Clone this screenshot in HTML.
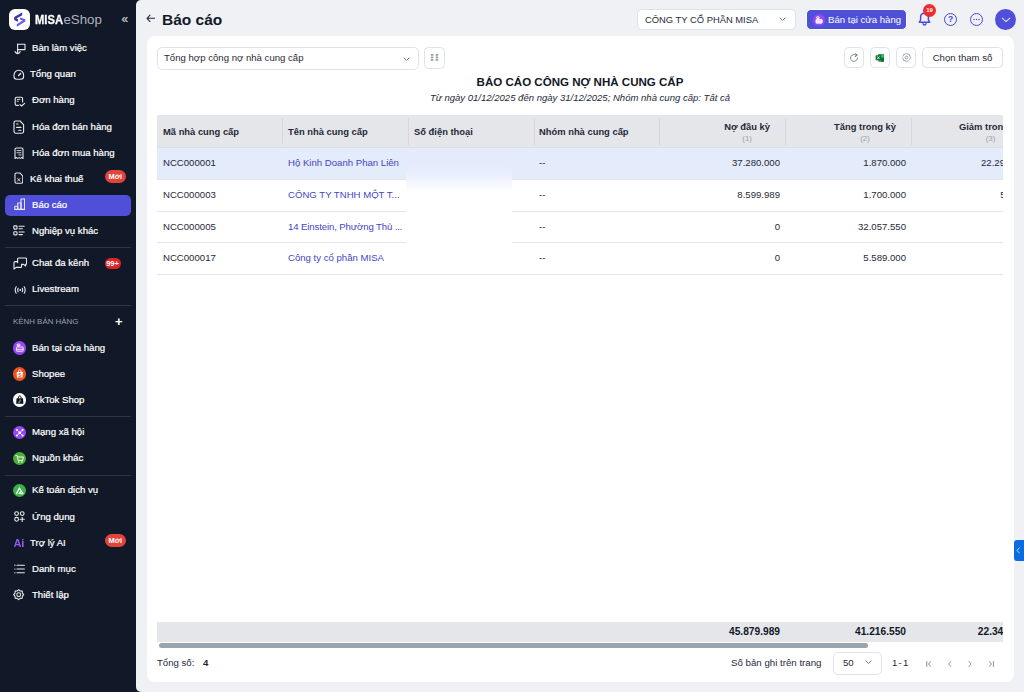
<!DOCTYPE html>
<html lang="vi">
<head>
<meta charset="utf-8">
<title>Báo cáo công nợ nhà cung cấp</title>
<style>
*{box-sizing:border-box;margin:0;padding:0}
html,body{width:1024px;height:692px;overflow:hidden}
body{font-family:"Liberation Sans",sans-serif;background:#111827;color:#1f2937;font-size:10.4px;position:relative}
.abs{position:absolute}
/* sidebar */
#sb{position:absolute;left:0;top:0;width:136px;height:692px;background:#111827;color:#fff}
#sb .it{position:absolute;left:5px;width:126px;height:22px;border-radius:5px;line-height:22px;font-size:9.6px;color:#fff;white-space:nowrap}
#sb .it .ic{position:absolute;left:7px;top:3px;width:16px;height:16px}
#sb .it .tx{position:absolute;left:27px;top:0;-webkit-text-stroke:.22px #fff}
#sb .it.on{background:#4f4fd9}
#sb .dv{position:absolute;left:5px;width:126px;height:1px;background:#2d3444}
#sb .bdg{position:absolute;top:4px;height:13px;line-height:13px;border-radius:7px;background:#e5484d;color:#fff;font-size:7.5px;font-weight:bold;text-align:center}
.circ{position:absolute;left:7.8px;top:4.6px;width:13.6px;height:13.6px;border-radius:50%}
/* topbar */
#title{position:absolute;left:162px;top:10px;font-size:15.5px;font-weight:bold;color:#111827;line-height:20px}
.box{position:absolute;background:#fff;border:1px solid #dfe2e8;border-radius:4.5px}
/* card */
#card{position:absolute;left:147px;top:36px;width:867px;height:646px;background:#fff;border-radius:8px}
#tbl{position:absolute;left:157px;top:115px;width:846px;height:533px;overflow:hidden}
.hd{position:absolute;left:0;top:0;width:1400px;height:33px;background:#e5e6ea;border-bottom:1px solid #dcdee4}
.hd .c{position:absolute;top:0;height:33px;font-weight:bold;color:#1f2937;font-size:9.4px;white-space:nowrap}
.hd .sep{position:absolute;top:3px;width:1px;height:27px;background:#d6d8de}
.row{position:absolute;left:0;width:1400px;height:32px;border-bottom:1px solid #e3e5ea;font-size:9.6px;color:#1f2937}
.row .c{position:absolute;top:0;line-height:29.4px;white-space:nowrap}
.row.sel{background:#e4ebfb}
.lnk{color:#4545c4}
.num{text-align:right}

.hd .h2{text-align:center;line-height:11px;padding-top:5.6px;white-space:nowrap}
.hd .h2 span{display:block;font-weight:normal;color:#9aa0ab;font-size:7.8px;line-height:11px;margin-top:1.2px}
.tot .c{position:absolute;top:0;line-height:19px;font-weight:bold;font-size:10.2px;color:#111827;white-space:nowrap}
.pg{top:652px;line-height:22px;font-size:9.6px;color:#1f2937;white-space:nowrap}
.ic2{position:absolute;left:7.8px;top:4.6px}
</style>
</head>
<body>
<div id="sb">
  <!-- logo -->
  <div class="abs" style="left:8.6px;top:8.6px;width:21px;height:21px;background:#fff;border-radius:6px"></div>
  <svg class="abs" style="left:8.6px;top:8.6px" width="21" height="21" viewBox="0 0 21 21"><path d="M13.2 3.5 L5.2 7.9 L5.2 11.1 L9 12.8 L9 10.3 L7.4 9.5 L13.2 6.2 Z" fill="#3a34a8"/><path d="M11 8.5 L16.3 10.3 L16.3 12.4 L7.8 17.8 L7.8 15.2 L13.6 11.6 L11 10.5 Z" fill="#6a5cf0"/></svg>
  <div class="abs" style="left:34.6px;top:10.5px;font-size:13px;line-height:18px;font-weight:bold;color:#fff;transform:scaleX(.86);transform-origin:0 0;-webkit-text-stroke:.3px #fff">MISA</div>
  <div class="abs" style="left:63.4px;top:11px;font-size:13.3px;line-height:18px;color:#aeb3bd">eShop</div>
  <div class="abs" style="left:121.6px;top:11px;font-size:12px;line-height:16px;color:#e5e7eb">«</div>

  <div class="it" style="top:37px"><span class="tx">Bàn làm việc</span></div>
  <div class="it" style="top:63px"><span class="tx" style="left:25px">Tổng quan</span></div>
  <div class="it" style="top:89px"><span class="tx">Đơn hàng</span></div>
  <div class="it" style="top:115.5px"><span class="tx">Hóa đơn bán hàng</span></div>
  <div class="it" style="top:141.5px"><span class="tx">Hóa đơn mua hàng</span></div>
  <div class="it" style="top:167.5px"><span class="tx" style="left:25px">Kê khai thuế</span><span class="bdg" style="left:99.5px;width:21.5px;top:2.5px;background:#e3443a">Mới</span></div>
  <div class="it on" style="top:194.5px;height:21.3px;line-height:19.6px"><span class="tx">Báo cáo</span></div>
  <div class="it" style="top:220px"><span class="tx">Nghiệp vụ khác</span></div>
  <div class="dv" style="top:247px"></div>
  <div class="it" style="top:252px"><span class="tx">Chat đa kênh</span><span class="bdg" style="left:99.5px;width:16px;top:6px;height:11px;line-height:11px;background:#dc2626">99+</span></div>
  <div class="it" style="top:278px"><span class="tx">Livestream</span></div>
  <div class="dv" style="top:305px"></div>
  <div class="abs" style="left:13px;top:316px;font-size:7.9px;line-height:12px;color:#9aa1ad;letter-spacing:0">KÊNH BÁN HÀNG</div>
  <div class="abs" style="left:115px;top:314px;font-size:13px;line-height:16px;color:#fff;font-weight:bold">+</div>
  <div class="it" style="top:336.7px"><span class="circ" style="background:#9747f5"></span><svg class="ic2" width="13.6" height="13.6" viewBox="0 0 13.6 13.6"><g fill="none" stroke="#fff" stroke-width=".9" stroke-linejoin="round"><rect x="3.4" y="6" width="6.8" height="4.2" rx=".6"/><path d="M3.4 8.3 H10.2"/><rect x="4.2" y="3.2" width="2.6" height="1.6"/><path d="M5.5 4.8 V6"/></g></svg><span class="tx">Bán tại cửa hàng</span></div>
  <div class="it" style="top:362.7px"><span class="circ" style="background:#f4511e"></span><svg class="ic2" width="13.6" height="13.6" viewBox="0 0 13.6 13.6"><path d="M3.6 5 H10 L9.6 10.6 H4 Z" fill="#fff"/><path d="M5.4 5 Q5.4 2.8 6.8 2.8 Q8.2 2.8 8.2 5" fill="none" stroke="#fff" stroke-width=".8"/><text x="6.8" y="9.8" font-size="5" font-weight="bold" fill="#f4511e" text-anchor="middle" font-family="Liberation Sans, sans-serif">S</text></svg><span class="tx">Shopee</span></div>
  <div class="it" style="top:388.7px"><span class="circ" style="background:#fff"></span><svg class="ic2" width="13.6" height="13.6" viewBox="0 0 13.6 13.6"><path d="M3.6 5.2 H10 L10.4 10.8 H3.2 Z" fill="#0b0b0f"/><path d="M5.4 5.2 Q5.4 2.8 6.8 2.8 Q8.2 2.8 8.2 5.2" fill="none" stroke="#0b0b0f" stroke-width=".9"/><path d="M7 6.4 V9 Q7 9.9 6.1 9.9 Q5.4 9.8 5.5 9.1 Q5.7 8.5 6.5 8.6 M7 6.6 Q7.4 7.4 8.3 7.4" fill="none" stroke="#5fe0e0" stroke-width=".7"/></svg><span class="tx">TikTok Shop</span></div>
  <div class="dv" style="top:416px"></div>
  <div class="it" style="top:421px"><span class="circ" style="background:#9747f5"></span><svg class="ic2" width="13.6" height="13.6" viewBox="0 0 13.6 13.6"><g stroke="#fff" stroke-width=".7"><path d="M4 4 L9.6 9.6 M9.6 4 L4 9.6"/></g><g fill="#fff"><circle cx="6.8" cy="6.8" r="1.4"/><circle cx="4" cy="4" r="1"/><circle cx="9.6" cy="4" r="1"/><circle cx="4" cy="9.6" r="1"/><circle cx="9.6" cy="9.6" r="1"/></g></svg><span class="tx">Mạng xã hội</span></div>
  <div class="it" style="top:447px"><span class="circ" style="background:#4caf3a"></span><svg class="ic2" width="13.6" height="13.6" viewBox="0 0 13.6 13.6"><g fill="none" stroke="#fff" stroke-width=".9" stroke-linejoin="round" stroke-linecap="round"><path d="M2.8 3.6 H4.2 L5.2 8.4 H9.6 L10.4 5 H4.6"/></g><circle cx="5.8" cy="10" r=".8" fill="#fff"/><circle cx="9" cy="10" r=".8" fill="#fff"/></svg><span class="tx">Nguồn khác</span></div>
  <div class="dv" style="top:475px"></div>
  <div class="it" style="top:479.3px"><span class="circ" style="background:#3bb54a"></span><svg class="ic2" width="13.6" height="13.6" viewBox="0 0 13.6 13.6"><g fill="none" stroke="#fff" stroke-width="1.25" stroke-linejoin="round" stroke-linecap="round"><path d="M3.6 9.6 L6.4 4 L7.6 6"/><path d="M6 9.6 L8.2 6.8 L10 9.6 H7.6"/></g></svg><span class="tx">Kế toán dịch vụ</span></div>
  <div class="it" style="top:506px"><span class="tx">Ứng dụng</span></div>
  <div class="it" style="top:532px"><span class="tx" style="left:25px">Trợ lý AI</span><span class="bdg" style="left:99.5px;width:21.5px;top:1.5px;background:#e3443a">Mới</span></div>
  <div class="it" style="top:558px"><span class="tx">Danh mục</span></div>
  <div class="it" style="top:584px"><span class="tx">Thiết lập</span></div>
<!-- sidebar icons -->
<svg class="abs" style="left:13.5px;top:42.9px" width="12" height="12" viewBox="0 0 12 12" ><g fill="none" stroke="#e8eaee" stroke-width="1.1" stroke-linecap="round" stroke-linejoin="round"><path d="M3.6 1 V9.6"/><path d="M3.6 1.3 H11 V6.6 H3.6"/><path d="M1 8.6 Q3.6 12.6 6.2 8.6"/></g></svg>
<svg class="abs" style="left:13px;top:68.6px" width="12" height="12" viewBox="0 0 12 12" ><g fill="none" stroke="#e8eaee" stroke-width="1.1" stroke-linecap="round" stroke-linejoin="round"><path d="M1 6 A4.8 4.8 0 0 1 10.6 6 V7.6 Q10.6 10.3 8 10.3 H3.6 Q1 10.3 1 7.6 Z"/><path d="M5.6 6.4 L7.6 4.4" stroke-width="1.4"/></g></svg>
<svg class="abs" style="left:14.1px;top:95.8px" width="12" height="11" viewBox="0 0 12 11" ><g fill="none" stroke="#e8eaee" stroke-width="1.1" stroke-linecap="round" stroke-linejoin="round"><path d="M4.4 9.4 H2.6 Q1.2 9.4 1.2 8 V2.6 Q1.2 1.2 2.6 1.2 H7 Q8.6 1.2 8.6 2.6 V6"/><path d="M3.2 3.4 H6 M3.2 5.2 H4.4" stroke-width=".9"/><path d="M6 8.6 L7.6 10 L10.6 7.4"/></g></svg>
<svg class="abs" style="left:12.5px;top:120px" width="12" height="14.5" viewBox="0 0 12 14.5" ><g fill="none" stroke="#e8eaee" stroke-width="1.1" stroke-linecap="round" stroke-linejoin="round" stroke-width="1.2"><path d="M2.6 1 H7 L10.6 4.6 V11.6 Q10.6 13.2 9 13.2 H2.6 Q1 13.2 1 11.6 V2.6 Q1 1 2.6 1 Z"/><path d="M3.6 4 H5 M3.6 7.4 H8 M5.6 10.2 H8" stroke-width="1.1"/></g></svg>
<svg class="abs" style="left:13.5px;top:147px" width="10" height="12.5" viewBox="0 0 10 12.5" ><g fill="none" stroke="#e8eaee" stroke-width="1.1" stroke-linecap="round" stroke-linejoin="round"><path d="M1 11.4 V2.4 Q1 1 2.4 1 H7.6 Q9 1 9 2.4 V11.4 L7.6 10.6 L6.3 11.4 L5 10.6 L3.7 11.4 L2.4 10.6 Z"/><path d="M3 3.6 H7 M3 5.8 H7 M5 8 H7" stroke-width=".9"/></g></svg>
<svg class="abs" style="left:13.5px;top:172.2px" width="9.7" height="12.1" viewBox="0 0 10 12.5" ><g fill="none" stroke="#e8eaee" stroke-width="1.1" stroke-linecap="round" stroke-linejoin="round"><path d="M2.4 1 H6 L9 4 V10.2 Q9 11.6 7.6 11.6 H2.4 Q1 11.6 1 10.2 V2.4 Q1 1 2.4 1 Z"/><path d="M3.6 9.4 L6.2 6.6 M3.6 6.6 L6.2 9.4" stroke-width=".9"/></g></svg>
<svg class="abs" style="left:13.5px;top:198.3px" width="11.5" height="12.2" viewBox="0 0 11.5 12.2" ><g fill="none" stroke="#e8eaee" stroke-width="1.1" stroke-linecap="round" stroke-linejoin="round"><path d="M.8 11.4 V8.2 H3.8 V11.4 Z"/><path d="M3.8 11.4 V5 H7 V11.4 Z"/><path d="M7 11.4 V1 H10.6 V11.4 Z"/></g></svg>
<svg class="abs" style="left:13px;top:224.8px" width="12" height="11" viewBox="0 0 12 11" ><g fill="none" stroke="#e8eaee" stroke-width="1.1" stroke-linecap="round" stroke-linejoin="round"><rect x=".8" y=".9" width="3.2" height="3.2" rx=".8"/><rect x=".8" y="6.7" width="3.2" height="3.2" rx=".8"/><path d="M6 1.2 H11.2 M6 3.8 H9.4 M6 7 H11.2 M6 9.6 H9.4"/></g></svg>
<svg class="abs" style="left:12.5px;top:257px" width="14.5" height="13" viewBox="0 0 14.5 13" ><g fill="none" stroke="#e8eaee" stroke-width="1.1" stroke-linecap="round" stroke-linejoin="round"><path d="M4.6 5.8 V2 Q4.6 1 5.6 1 H12.6 Q13.6 1 13.6 2 V6.4 Q13.6 7.4 12.6 7.4 V9 L10.6 7.4 H8.6"/><path d="M4.6 4.6 H2 Q1 4.6 1 5.6 V12 L3.2 10.4 H7.6 Q8.6 10.4 8.6 9.4 V7.4"/></g></svg>
<svg class="abs" style="left:13.5px;top:286px" width="12.4" height="8" viewBox="0 0 12.4 8" ><g fill="none" stroke="#e8eaee" stroke-width="1.1" stroke-linecap="round" stroke-linejoin="round" stroke-width="1"><circle cx="6.2" cy="4" r=".9" fill="#e8eaee" stroke="none"/><path d="M4.2 2.2 Q3.2 4 4.2 5.8 M8.2 2.2 Q9.2 4 8.2 5.8 M2.2 .8 Q.2 4 2.2 7.2 M10.2 .8 Q12.2 4 10.2 7.2"/></g></svg>
<svg class="abs" style="left:14.4px;top:511.4px" width="11" height="11" viewBox="0 0 11 11" ><g fill="none" stroke="#e8eaee" stroke-width="1.1" stroke-linecap="round" stroke-linejoin="round" stroke-width="1"><circle cx="2.6" cy="2.6" r="1.9"/><circle cx="8.2" cy="2.6" r="1.9"/><circle cx="2.6" cy="8.3" r="1.9"/><path d="M8.2 6.2 V10.4 M6.1 8.3 H10.3"/></g></svg>
<svg class="abs" style="left:13.5px;top:564.4px" width="11.2" height="10" viewBox="0 0 11.2 10" ><g fill="none" stroke="#e8eaee" stroke-width="1.1" stroke-linecap="round" stroke-linejoin="round"><path d="M3 1.2 H10.4 M3 5 H10.4 M3 8.8 H10.4"/><path d="M.8 1.2 H1 M.8 5 H1 M.8 8.8 H1" stroke-width="1.2"/></g></svg>
<svg class="abs" style="left:13.4px;top:589.3px" width="11.4" height="11.4" viewBox="0 0 11.4 11.4" ><g fill="none" stroke="#e8eaee" stroke-width="1.1" stroke-linecap="round" stroke-linejoin="round" stroke-width="1"><path d="M5.70 0.70 L7.23 2.00 L9.24 2.16 L9.40 4.17 L10.70 5.70 L9.40 7.23 L9.24 9.24 L7.23 9.40 L5.70 10.70 L4.17 9.40 L2.16 9.24 L2.00 7.23 L0.70 5.70 L2.00 4.17 L2.16 2.16 L4.17 2.00 Z"/><circle cx="5.7" cy="5.7" r="1.9"/></g></svg>
<div class="abs" style="left:13.4px;top:536px;font-size:11px;line-height:14px;font-weight:bold;color:#8b5cf6;background:linear-gradient(100deg,#6f5cf6,#b45cf6);-webkit-background-clip:text;background-clip:text;-webkit-text-fill-color:transparent;letter-spacing:0">Ai</div>
</div>

<div class="abs" style="left:136px;top:0;width:888px;height:692px;background:#eff1f5;border-radius:5px 0 0 5px"></div>
<!-- topbar -->
<svg class="abs" style="left:145.7px;top:13.8px" width="9.5" height="8.6" viewBox="0 0 11 10"><path d="M4.6 1.2 L1.2 5 L4.6 8.8 M1.4 5 H10" fill="none" stroke="#1f2937" stroke-width="1.2" stroke-linecap="round" stroke-linejoin="round"/></svg>
<div id="title">Báo cáo</div>
<div class="box" style="left:637px;top:8.7px;width:159px;height:21.8px;border-radius:5px"></div>
<div class="abs" style="left:645px;top:9px;line-height:21px;font-size:9.4px;color:#1f2937;white-space:nowrap">CÔNG TY CỔ PHẦN MISA</div>
<svg class="abs" style="left:779.4px;top:17.4px" width="7" height="4.4" viewBox="0 0 8 5"><path d="M1 1 L4 4 L7 1" fill="none" stroke="#5b6370" stroke-width=".95" stroke-linecap="round" stroke-linejoin="round"/></svg>
<div class="abs" style="left:806px;top:9px;width:100.5px;height:21px;border-radius:5px;background:#4f50d8;border:1px solid #fff"></div>
<div class="abs" style="left:812.8px;top:13.5px;width:12.2px;height:12.2px;border-radius:50%;background:#9a45f8"></div><svg class="abs" style="left:812.8px;top:13.5px" width="12.2" height="12.2" viewBox="0 0 13.6 13.6"><g fill="none" stroke="#fff" stroke-width="1" stroke-linejoin="round"><rect x="3.4" y="6" width="6.8" height="4.2" rx=".6" fill="#e9d5ff"/><path d="M3.4 8.3 H10.2"/><rect x="4.2" y="3.2" width="2.6" height="1.6"/><path d="M5.5 4.8 V6"/></g></svg>
<div class="abs" style="left:828px;top:10px;line-height:19px;font-size:9.6px;color:#fff;white-space:nowrap">Bán tại cửa hàng</div>
<!-- bell -->
<svg class="abs" style="left:917px;top:11.3px" width="15" height="16" viewBox="0 0 15 16"><path d="M7.5 2.2 C5 2.2 3.6 4 3.6 6.2 V9 L2.3 11.2 H12.7 L11.4 9 V6.2 C11.4 4 10 2.2 7.5 2.2 Z" fill="none" stroke="#4a48d6" stroke-width="1.45" stroke-linejoin="round"/><path d="M6 12.8 C6.3 13.6 6.9 14 7.5 14 C8.1 14 8.7 13.6 9 12.8" fill="none" stroke="#4a48d6" stroke-width="1.45" stroke-linecap="round"/></svg>
<div class="abs" style="left:923px;top:3.7px;width:13px;height:13px;border-radius:50%;background:#ef2b2d;color:#fff;font-size:6px;font-weight:bold;line-height:13px;text-align:center;letter-spacing:-.2px">19</div>
<div class="abs" style="left:944px;top:12.8px;width:13.2px;height:13.2px;border-radius:50%;border:1.5px solid #4a48d6;color:#4a48d6;font-size:8.5px;font-weight:bold;line-height:10.2px;text-align:center">?</div>
<div class="abs" style="left:970px;top:12.8px;width:13.2px;height:13.2px;border-radius:50%;border:1.5px solid #4a48d6"></div>
<svg class="abs" style="left:970.1px;top:12.9px" width="13" height="13" viewBox="0 0 13 13"><circle cx="4" cy="6.5" r=".7" fill="#4545d0"/><circle cx="6.5" cy="6.5" r=".7" fill="#4545d0"/><circle cx="9" cy="6.5" r=".7" fill="#4545d0"/></svg>
<div class="abs" style="left:995px;top:9px;width:21px;height:21px;border-radius:50%;background:#4f4fd9"></div>
<svg class="abs" style="left:1001px;top:17px" width="10" height="6" viewBox="0 0 10 6"><path d="M1.2 1.2 L5 4.6 L8.8 1.2" fill="none" stroke="#e4e7ff" stroke-width="1.05" stroke-linecap="round" stroke-linejoin="round"/></svg>

<div id="card"></div>
<!-- toolbar -->
<div class="box" style="left:157px;top:47px;width:262px;height:22.5px;border-radius:5px"></div>
<div class="abs" style="left:164px;top:47px;line-height:22px;font-size:9.6px;color:#1f2937;white-space:nowrap">Tổng hợp công nợ nhà cung cấp</div>
<svg class="abs" style="left:403.4px;top:56.6px" width="7" height="4.4" viewBox="0 0 8 5"><path d="M1 1 L4 4 L7 1" fill="none" stroke="#5b6370" stroke-width=".95" stroke-linecap="round" stroke-linejoin="round"/></svg>
<div class="box" style="left:424px;top:47px;width:21px;height:21.5px"></div>
<svg class="abs" style="left:429.6px;top:53px" width="10" height="9" viewBox="0 0 10 9"><g fill="#9aa1ac"><rect x=".8" y="1" width="2.6" height="1.8"/><rect x=".8" y="3.5" width="2.6" height="1.8"/><rect x=".8" y="6" width="2.6" height="1.8"/><rect x="5.6" y="1" width="2.6" height="1.8"/><rect x="5.6" y="3.5" width="2.6" height="1.8"/><rect x="5.6" y="6" width="2.6" height="1.8"/></g></svg>
<div class="box" style="left:844px;top:47px;width:20px;height:21px"></div>
<svg class="abs" style="left:848.6px;top:52.6px" width="10" height="10" viewBox="0 0 11 11"><path d="M9.3 5.5 A3.8 3.8 0 1 1 7.6 2.3" fill="none" stroke="#6b7280" stroke-width=".9" stroke-linecap="round"/><path d="M7 0.8 L9.2 2.4 L6.9 3.9" fill="none" stroke="#5b6370" stroke-width="1" stroke-linecap="round" stroke-linejoin="round"/></svg>
<div class="box" style="left:870px;top:47px;width:20px;height:21px"></div>
<svg class="abs" style="left:875.2px;top:52.8px" width="9.6" height="9.6" viewBox="0 0 12 12"><rect x="4" y="1.2" width="7.2" height="9.6" rx=".8" fill="#1f9a4c"/><rect x="7.6" y="1.2" width="3.6" height="4.8" fill="#2db562"/><rect x="7.6" y="6" width="3.6" height="4.8" fill="#0f6e34"/><rect x=".8" y="2.8" width="6.8" height="6.4" rx=".8" fill="#0f6e34"/><path d="M2.8 4.3 L5.6 7.7 M5.6 4.3 L2.8 7.7" stroke="#fff" stroke-width="1.1" /></svg>
<div class="box" style="left:896px;top:47px;width:20px;height:21px"></div>
<svg class="abs" style="left:900.6px;top:52.4px" width="11" height="11" viewBox="0 0 11 11"><path d="M5.50 1.30 L6.88 2.17 L8.47 2.53 L8.83 4.12 L9.70 5.50 L8.83 6.88 L8.47 8.47 L6.88 8.83 L5.50 9.70 L4.12 8.83 L2.53 8.47 L2.17 6.88 L1.30 5.50 L2.17 4.12 L2.53 2.53 L4.12 2.17 Z" fill="none" stroke="#8b929e" stroke-width=".85" stroke-linejoin="round" stroke-dasharray="9 1.4"/><circle cx="5.5" cy="5.5" r="1.4" fill="none" stroke="#8b929e" stroke-width=".85"/></svg>
<div class="box" style="left:922px;top:47px;width:81px;height:21px"></div>
<div class="abs" style="left:922px;top:46.5px;width:81px;text-align:center;line-height:21px;font-size:9.6px;color:#1f2937;white-space:nowrap">Chọn tham số</div>

<div class="abs" style="left:157px;top:74px;width:846px;text-align:center;font-size:11.55px;font-weight:bold;color:#111827;line-height:16px;white-space:nowrap">BÁO CÁO CÔNG NỢ NHÀ CUNG CẤP</div>
<div class="abs" style="left:157px;top:90.8px;width:846px;text-align:center;font-size:9.54px;font-style:italic;color:#1f2937;line-height:14px;white-space:nowrap">Từ ngày 01/12/2025 đến ngày 31/12/2025; Nhóm nhà cung cấp: Tất cả</div>

<div id="tbl">
  <div class="hd">
    <div class="c" style="left:6px;line-height:33px">Mã nhà cung cấp</div>
    <div class="sep" style="left:125px"></div>
    <div class="c" style="left:131px;line-height:33px">Tên nhà cung cấp</div>
    <div class="sep" style="left:251px"></div>
    <div class="c" style="left:257px;line-height:33px">Số điện thoại</div>
    <div class="sep" style="left:377px"></div>
    <div class="c" style="left:382px;line-height:33px">Nhóm nhà cung cấp</div>
    <div class="sep" style="left:502px"></div>
    <div class="c h2" style="right:787px">Nợ đầu kỳ<span>(1)</span></div>
    <div class="sep" style="left:628px"></div>
    <div class="c h2" style="right:661px">Tăng trong kỳ<span>(2)</span></div>
    <div class="sep" style="left:754px"></div>
    <div class="c h2" style="right:535px">Giảm trong kỳ<span>(3)</span></div>
  </div>
  <div class="row sel" style="top:33px">
    <div class="c" style="left:6px">NCC000001</div><div class="c lnk" style="left:131px">Hộ Kinh Doanh Phan Liên</div><div class="c" style="left:382px">--</div>
    <div class="c num" style="right:777px">37.280.000</div><div class="c num" style="right:651px">1.870.000</div><div class="c num" style="right:528px">22.290.000</div>
  </div>
  <div class="row" style="top:65px">
    <div class="c" style="left:6px">NCC000003</div><div class="c lnk" style="left:131px">CÔNG TY TNHH MỘT T...</div><div class="c" style="left:382px">--</div>
    <div class="c num" style="right:777px">8.599.989</div><div class="c num" style="right:651px">1.700.000</div><div class="c num" style="right:527.5px">50.000</div>
  </div>
  <div class="row" style="top:97px;height:31px">
    <div class="c" style="left:6px">NCC000005</div><div class="c lnk" style="left:131px;letter-spacing:-.12px">14 Einstein, Phường Thủ ...</div><div class="c" style="left:382px">--</div>
    <div class="c num" style="right:777px">0</div><div class="c num" style="right:651px">32.057.550</div>
  </div>
  <div class="row" style="top:128px;height:32px">
    <div class="c" style="left:6px">NCC000017</div><div class="c lnk" style="left:131px">Công ty cổ phần MISA</div><div class="c" style="left:382px">--</div>
    <div class="c num" style="right:777px">0</div><div class="c num" style="right:651px">5.589.000</div>
  </div>
  <!-- redacted phone column -->
  <div class="abs" style="left:249px;top:37.5px;width:106px;height:117px;background:linear-gradient(to bottom,#e4eafa 0,#e6ecfb 17px,#eef2fc 26px,#f7f9fd 33px,#fff 40px,#fff 100%)"></div>
  <!-- totals -->
  <div class="abs tot" style="left:0;top:507px;width:1400px;height:20px;background:#e5e6ea">
    <div class="c" style="right:777px">45.879.989</div><div class="c" style="right:651px">41.216.550</div><div class="c" style="left:820.8px">22.340.000</div>
  </div>
  <div class="abs" style="left:0;top:527px;width:846px;height:6px;background:#fff"></div>
  <div class="abs" style="left:2px;top:528.4px;width:709px;height:5px;border-radius:3px;background:#9ba3af"></div>
</div>

<!-- pagination -->
<div class="abs pg" style="left:157px">Tổng số:</div>
<div class="abs pg" style="left:203px;font-weight:bold">4</div>
<div class="abs pg" style="left:731px;font-size:9.7px">Số bản ghi trên trang</div>
<div class="box" style="left:833px;top:652px;width:48.6px;height:22.5px;border-radius:5px"></div>
<div class="abs pg" style="left:843px">50</div>
<svg class="abs" style="left:865.4px;top:660.4px" width="7" height="4.4" viewBox="0 0 8 5"><path d="M1 1 L4 4 L7 1" fill="none" stroke="#5b6370" stroke-width=".95" stroke-linecap="round" stroke-linejoin="round"/></svg>
<div class="abs pg" style="left:892px;word-spacing:-1.2px;letter-spacing:-.1px">1 - 1</div>
<svg class="abs" style="left:924.2px;top:658.5px" width="72" height="10" viewBox="0 0 72 10"><g fill="none" stroke="#7b8290" stroke-width=".9" stroke-linecap="round" stroke-linejoin="round"><path d="M2.8 2.5 V7.5 M6.6 2.6 L4.5 5 L6.6 7.4"/><path d="M26.8 2.6 L24.7 5 L26.8 7.4"/><path d="M45 2.6 L47.1 5 L45 7.4"/><path d="M65.4 2.6 L67.5 5 L65.4 7.4 M69.4 2.5 V7.5"/></g></svg>

<!-- side tab -->
<div class="abs" style="left:1014px;top:540px;width:10px;height:21px;background:#0b6be0;border-radius:3px 0 0 3px"></div>
<svg class="abs" style="left:1015.6px;top:547.2px" width="4.6" height="6.9" viewBox="0 0 6 9"><path d="M4.5 1 L1.3 4.5 L4.5 8" fill="none" stroke="#e6efff" stroke-width="1.1" stroke-linecap="round" stroke-linejoin="round"/></svg>
</body>
</html>
